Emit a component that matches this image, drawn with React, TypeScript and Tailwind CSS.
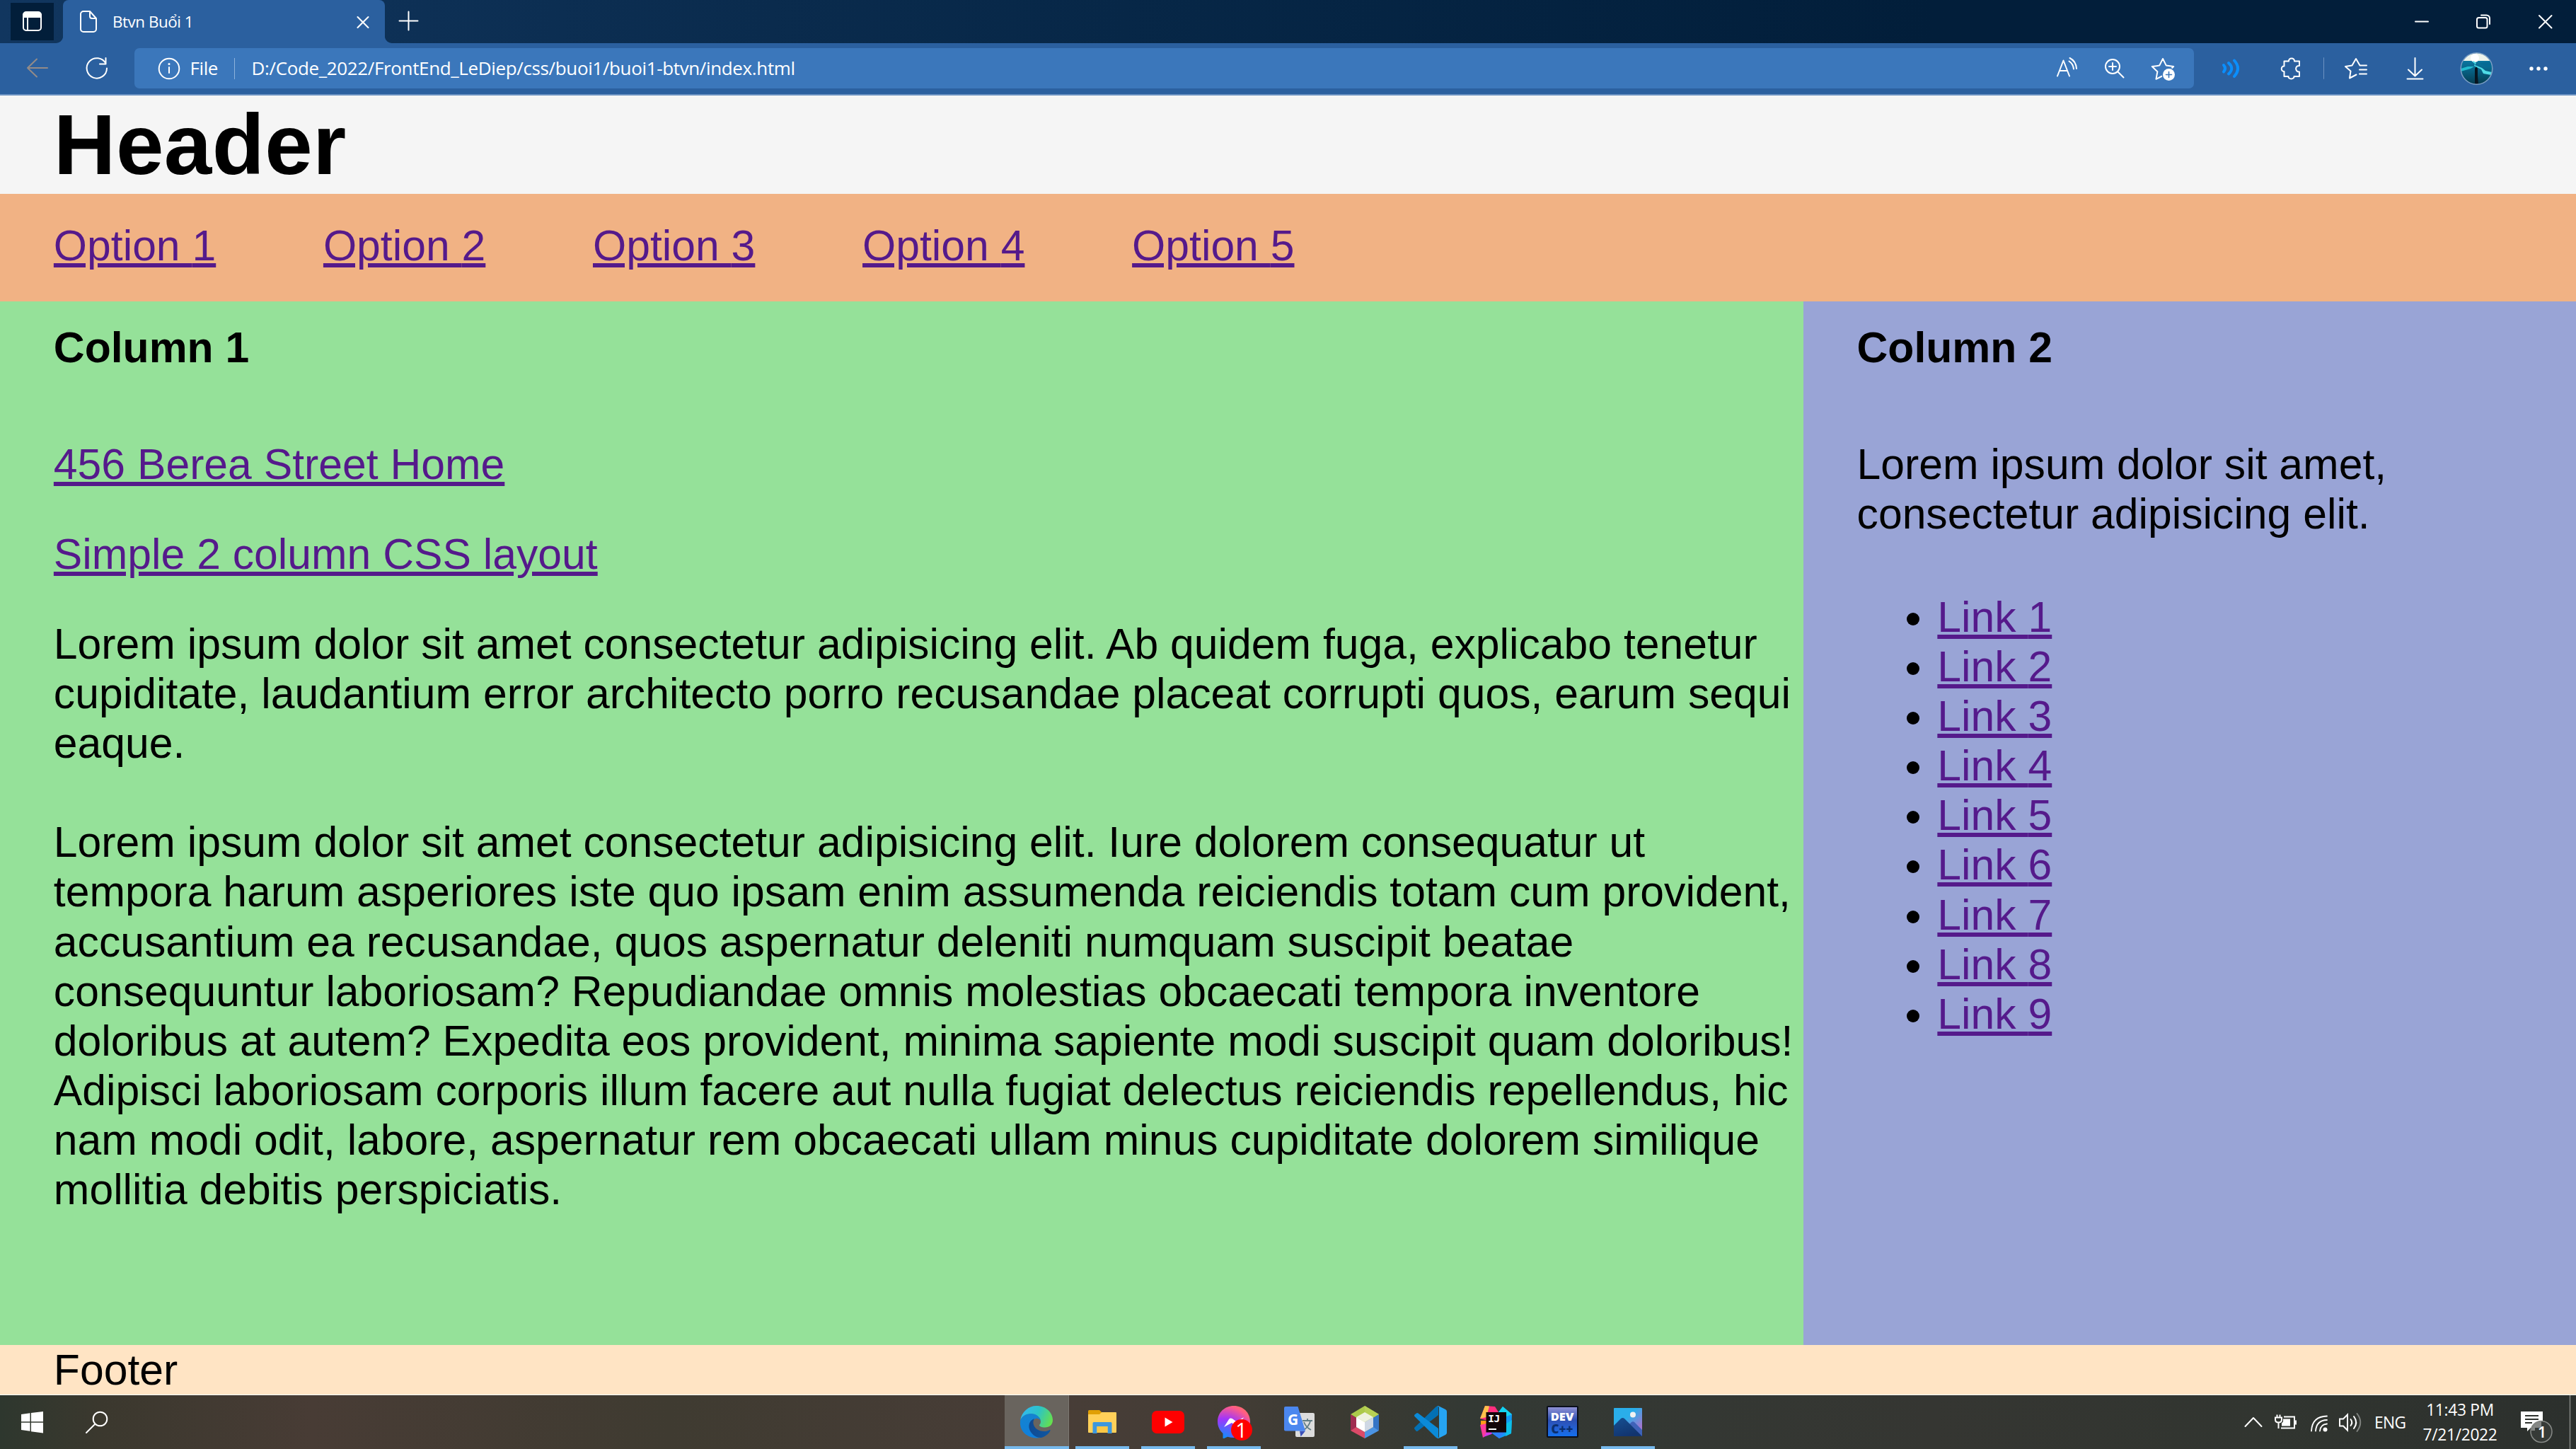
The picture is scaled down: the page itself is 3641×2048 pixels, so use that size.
import React from "react";

type CellProps = { x: number; w: number; y: number; h: number; className?: string; children: React.ReactNode };

/** Icon cell: draws in window coordinates, starting at x and spanning w. */
function Cell({ x, w, y, h, className = "", children }: CellProps) {
  return (
    <svg
      viewBox={`${x} ${y} ${w} ${h}`}
      style={{ width: w, height: h }}
      className={`shrink-0 ${className}`}
      fill="none"
      stroke="#fff"
      strokeWidth={2}
      strokeLinecap="round"
      strokeLinejoin="round"
    >
      {children}
    </svg>
  );
}

function TabStrip() {
  const r = { y: 0, h: 61 };
  return (
    <div className="flex h-[61px] items-start bg-linear-to-r from-[#11365f] via-[#0a2b4d] via-30% to-[#021e3a] to-75%">
      <Cell x={0} w={89} {...r}>
        <rect x="15" y="4" width="61" height="53" fill="#021e3a" stroke="none" />
        <rect x="33" y="18" width="25" height="25" rx="4" />
        <path d="M33 24v-3a4 4 0 0 1 4-4h17a4 4 0 0 1 4 4v3zM39 24v18" fill="#fff" />
        <path d="M79 61a10 10 0 0 0 10-8v8z" fill="#2b609f" stroke="none" />
      </Cell>
      <div className="flex h-[61px] w-[455px] shrink-0 items-center rounded-t-[8px] bg-[#2b609f]">
        <Cell x={89} w={70} {...r}>
          <path d="M118 16h9l9 10v15a4 4 0 0 1-4 4h-14a4 4 0 0 1-4-4V20a4 4 0 0 1 4-4zM127 16v7a3 3 0 0 0 3 3h6" />
        </Cell>
        <span className="w-[327px] whitespace-nowrap text-[22.4px] leading-[61px] tracking-[-0.45px] text-white">Btvn Buổi 1</span>
        <Cell x={486} w={58} {...r}>
          <path d="M505.500 24l15 15M520.500 24l-15 15" />
        </Cell>
      </div>
      <Cell x={544} w={80} {...r}>
        <path d="M544 61h10a10 10 0 0 1-10-8z" fill="#2b609f" stroke="none" />
        <path d="M564.500 29.500h26M577.500 16.500v26" />
      </Cell>
      <div className="flex-1" />
      <Cell x={3380} w={87} {...r}><path d="M3414 30.500h18" /></Cell>
      <Cell x={3467} w={87} {...r}>
        <rect x="3501" y="25" width="14.500" height="14.500" rx="2.500" />
        <path d="M3507 21.500h7.500a4.500 4.500 0 0 1 4.500 4.500v8" />
      </Cell>
      <Cell x={3554} w={87} {...r}><path d="M3589 22l17.500 17.500M3606.500 22L3589 39.500" /></Cell>
    </div>
  );
}

const STAR = "M0-15l4.800 9.600 10.400 1.400-7.600 7.300 1.900 10.500L0 9l-9.500 4.800 1.900-10.500-7.600-7.300 10.400-1.400z";

function Toolbar() {
  const r = { y: 61, h: 74 };
  return (
    <div className="flex h-[73.500px] items-start border-b-2 border-[#6c93c2] bg-[#2b609f]">
      <Cell x={0} w={95} {...r}><path d="M67 96H39M52 83.500L39 96l13 12.500" stroke="#938b88" /></Cell>
      <Cell x={95} w={95} {...r}>
        <path d="M149.500 90A14.200 14.200 0 1 0 151 96.500M149.500 82v8.500h-8.500" />
      </Cell>
      <div className="mt-[7px] flex h-[57px] w-[2911px] shrink-0 items-center rounded-[7px] bg-[#3b77bb] text-[26px] leading-[57px] text-white">
        <Cell x={190} w={78.500} y={68} h={57}>
          <circle cx="239" cy="97" r="14.300" />
          <path d="M239 95v8" />
          <circle cx="239" cy="90.500" r="0.800" fill="#fff" strokeWidth="1.500" />
        </Cell>
        <span className="w-[62px] tracking-[-0.400px]">File</span>
        <span className="h-[30px] w-[1.500px] bg-[#8db2dc]" />
        <span className="ml-[23.500px] flex-1 whitespace-nowrap tracking-[-0.360px]">D:/Code_2022/FrontEnd_LeDiep/css/buoi1/buoi1-btvn/index.html</span>
        <Cell x={2887} w={67} y={68} h={57}>
          <path d="M2908 107.500l8.500-22 8.500 22M2911 100h11M2924.500 86.500c4 2.500 6 6 6.500 11M2925.500 82c6 3 9 8 9.500 15" />
        </Cell>
        <Cell x={2954} w={68} y={68} h={57}>
          <circle cx="2986" cy="94" r="10" />
          <path d="M2993.500 101.500l8 8M2986 89v10M2981 94h10" />
        </Cell>
        <Cell x={3022} w={79} y={68} h={57}>
          <path d={STAR} transform="translate(3057 98)" />
          <circle cx="3065.500" cy="105.500" r="10" fill="#3b77bb" stroke="none" />
          <circle cx="3065.500" cy="105.500" r="8.500" fill="#fff" stroke="none" />
          <path d="M3065.500 101.500v8M3061.500 105.500h8" stroke="#3b77bb" strokeWidth="1.600" />
        </Cell>
      </div>
      <Cell x={3101} w={89} {...r}>
        <path d="M3143 92q4 4.500 0 9.500M3150 89q8.500 7.500 0 15.500M3158 85.500q10 11 0 22.500" stroke="#0a8fff" strokeWidth="4" />
      </Cell>
      <Cell x={3190} w={94} {...r}>
        <path d="M3228.500 86.500h6.500c-.5-5.500 8.500-5.500 8 0h7v6.500c-6.500-1-6.500 9 0 8.500v6.500h-7.500c.5 4.500-8.500 4.500-8 0h-6v-7c-5 .5-5-8 0-7.500z" />
      </Cell>
      <Cell x={3284} w={80} {...r}>
        <path d="M3284 82v29" stroke="#6c93c2" />
        <path d="M3345 92.500h-9.500l-5.500-9.500-5.500 9.500-9.500 1.500 7.500 6.500-1.500 10 9.500-5M3335 98.500h10M3335 104.500h10" />
      </Cell>
      <Cell x={3364} w={94} {...r}><path d="M3413.500 82v25M3404 98.500l9.500 9 9.500-9M3402.500 111.500h22" /></Cell>
      <Cell x={3458} w={94} {...r}>
        <defs>
          <clipPath id="avatar"><circle cx="3500.500" cy="97" r="22" /></clipPath>
          <linearGradient id="sea" x1="0" y1="0" x2="0" y2="1">
            <stop offset="0" stopColor="#0e86b4" />
            <stop offset="0.500" stopColor="#08678c" />
            <stop offset="1" stopColor="#053a4e" />
          </linearGradient>
        </defs>
        <g clipPath="url(#avatar)" stroke="none">
          <rect x="3478" y="74" width="46" height="46" fill="url(#sea)" />
          <rect x="3478" y="74" width="46" height="12" fill="#eef3ea" />
          <circle cx="3498" cy="82" r="6" fill="#fff" />
          <path d="M3496 86l4 3-2 3 10 4 5 4 9 2-1 4-11-2-3-6-10-5 1-3-3-2z" fill="#4fdbe6" />
          <path d="M3478 97l10-3 9 0-5 3-14 4z" fill="#23bccf" />
          <path d="M3504 89l20-2v8l-10-1z" fill="#056a94" />
          <path d="M3498 97q2-5 4 0v10l1 13h-5z" fill="#07141f" />
        </g>
        <circle cx="3500.500" cy="97" r="22.300" stroke="#7c9fc4" strokeWidth="1.500" />
      </Cell>
      <Cell x={3552} w={89} {...r}>
        <g fill="#fff" stroke="none"><circle cx="3578" cy="97" r="2.700" /><circle cx="3588" cy="97" r="2.700" /><circle cx="3598" cy="97" r="2.700" /></g>
      </Cell>
    </div>
  );
}

function A({ children }: { children: React.ReactNode }) {
  return (
    <a href="#" className="text-[#551a8b] underline decoration-[5.700px] underline-offset-[4px]">{children}</a>
  );
}

const PARAGRAPH_1 = [
  "Lorem ipsum dolor sit amet consectetur adipisicing elit. Ab quidem fuga, explicabo tenetur",
  "cupiditate, laudantium error architecto porro recusandae placeat corrupti quos, earum sequi",
  "eaque.",
];
const PARAGRAPH_2 = [
  "Lorem ipsum dolor sit amet consectetur adipisicing elit. Iure dolorem consequatur ut",
  "tempora harum asperiores iste quo ipsam enim assumenda reiciendis totam cum provident,",
  "accusantium ea recusandae, quos aspernatur deleniti numquam suscipit beatae",
  "consequuntur laboriosam? Repudiandae omnis molestias obcaecati tempora inventore",
  "doloribus at autem? Expedita eos provident, minima sapiente modi suscipit quam doloribus!",
  "Adipisci laboriosam corporis illum facere aut nulla fugiat delectus reiciendis repellendus, hic",
  "nam modi odit, labore, aspernatur rem obcaecati ullam minus cupiditate dolorem similique",
  "mollitia debitis perspiciatis.",
];

function Paragraph({ lines }: { lines: string[] }) {
  return (
    <p className="whitespace-nowrap">
      {lines.map((l) => <span key={l} className="block">{l}</span>)}
    </p>
  );
}

function Page() {
  return (
    <div className="font-['Liberation_Sans',Arial,sans-serif] text-[60.680px] leading-[70.160px] text-black">
      <header className="h-[139.900px] bg-[#f5f5f5] pl-[75.860px]">
        <h1 className="text-[121.370px] leading-[139.900px] font-bold tracking-[0.400px]">Header</h1>
      </header>
      <nav className="flex h-[151.700px] gap-[151.700px] bg-[#f1b284] pt-[37.400px] pl-[75.860px]">
        {[1, 2, 3, 4, 5].map((n) => <A key={n}>Option {n}</A>)}
      </nav>
      <div className="flex h-[1474.900px]">
        <main className="w-[70%] bg-[#95e199] pt-[29.800px] pl-[75.860px]">
          <h2 className="font-bold">Column 1</h2>
          <p className="mt-[94.500px]"><A>456 Berea Street Home</A></p>
          <p className="mt-[56.900px] mb-[56.900px]"><A>Simple 2 column CSS layout</A></p>
          <Paragraph lines={PARAGRAPH_1} />
          <div className="h-[70.160px]" />
          <Paragraph lines={PARAGRAPH_2} />
        </main>
        <aside className="w-[30%] bg-[#99a4d6] pt-[29.800px] pl-[75.860px]">
          <h2 className="font-bold">Column 2</h2>
          <p className="mt-[94.500px]">Lorem ipsum dolor sit amet,<br />consectetur adipisicing elit.</p>
          <ul className="mt-[75.860px] list-disc pl-[113.800px]">
            {[1, 2, 3, 4, 5, 6, 7, 8, 9].map((n) => <li key={n}><A>Link {n}</A></li>)}
          </ul>
        </aside>
      </div>
      <footer className="h-[71px] border-b-[1.500px] border-white bg-[#ffe4c4] pl-[75.860px]">Footer</footer>
    </div>
  );
}

function EdgeIcon() {
  return (
    <svg viewBox="0 0 46 46" className="size-[46px]">
      <defs>
        <linearGradient id="eg1" x1="0" y1="0.300" x2="1" y2="0.600"><stop offset="0" stopColor="#35b8f0" /><stop offset="0.500" stopColor="#2cc3c8" /><stop offset="1" stopColor="#65e04e" /></linearGradient>
        <linearGradient id="eg2" x1="0.300" y1="0" x2="0.500" y2="1"><stop offset="0" stopColor="#1583cf" /><stop offset="1" stopColor="#0f7fdc" /></linearGradient>
        <linearGradient id="eg3" x1="0" y1="0" x2="1" y2="0.300"><stop offset="0" stopColor="#10488f" /><stop offset="1" stopColor="#0f559f" /></linearGradient>
      </defs>
      <path d="M0 21C2 8 12 0 23 0c14 0 23 10 23 20 0 7-5 10.500-11 10.500-5 0-8-1.500-8-3 0-1 2-2 2-5 0-6-6-11-13-11C8 11.500 2 15 0 21z" fill="url(#eg1)" />
      <path d="M0 21c2-6 8-10 15-10 8 0 13 5 14 10-2-3-5-3.500-7-3-4 1-8 8-5 15s9 11 12 12C13 48-2 37 0 21z" fill="url(#eg2)" />
      <path d="M20 18c-6 2-9 8-7 15 2 6 9 13 17 12 6-2 11-6 12.500-10 .3-1-.6-1.300-1.300-.8C32 39 20 34 18.500 25c-.3-3 .5-5.500 1.500-7z" fill="url(#eg3)" />
    </svg>
  );
}

function ExplorerIcon() {
  return (
    <svg viewBox="0 0 40 34" className="h-[34px] w-[40px]">
      <path d="M0 1.500Q0 0 1.500 0H16l3 3-3 5H0z" fill="#e09f05" />
      <path d="M0 6h16l3-3h20q1 0 1 1v27q0 1-1 1H1q-1 0-1-1z" fill="#ffd059" />
      <path d="M6.500 33V18.500q0-1.500 1.500-1.500h24q1.500 0 1.500 1.500V33h-6V23h-15v10z" fill="#3c97de" />
      <path d="M12.500 23h15v9h-15z" fill="#fbc745" />
    </svg>
  );
}

function YouTubeIcon() {
  return (
    <svg viewBox="0 0 46 32" className="h-[32px] w-[46px]">
      <rect width="46" height="32" rx="7" fill="#f00" /><path d="M18.500 9.500v13l11-6.500z" fill="#fff" />
    </svg>
  );
}

function MessengerIcon() {
  return (
    <div className="relative size-[46px]">
      <svg viewBox="0 0 46 46" className="size-[46px]">
        <defs>
          <radialGradient id="ms" cx="0.200" cy="1" r="1.100"><stop offset="0" stopColor="#0a93ff" /><stop offset="0.550" stopColor="#a035fb" /><stop offset="0.900" stopColor="#ff5c87" /><stop offset="1" stopColor="#ff6c6c" /></radialGradient>
        </defs>
        <path d="M23 0C10 0 0 9.500 0 22.300 0 29 3 35 7.500 39v6c0 1 .8 1.300 1.600 1l5-2.300c2.800.8 5.700 1.200 8.900 1.200 13 0 23-9.500 23-22.600C46 9.500 36 0 23 0z" fill="url(#ms)" />
        <path d="M9 30l7-11q2-2.500 5-.8l5.500 4 10.500-6-7 11q-2 2.500-4.500.8l-5.500-4z" fill="#fff" />
      </svg>
      <span className="absolute top-[19px] left-[19px] flex size-[30px] items-center justify-center rounded-full bg-[#f00] text-[29px] leading-[30px] text-white">1</span>
    </div>
  );
}

function TranslateIcon() {
  return (
    <div className="relative h-[44px] w-[43px]">
      <svg viewBox="0 0 43 44" className="h-[44px] w-[43px]">
        <rect x="16" y="9" width="27" height="34" rx="2" fill="#dcdcdc" />
        <path d="M22 34.500h8l-6.500 8z" fill="#3a4fb8" />
        <path d="M26 20h14M33 17v3M37 21c-2 6-6 10-9 12M28 22c2 5 6 9 10 11" stroke="#607d85" strokeWidth="1.800" fill="none" />
        <path d="M2 0h17.500L30 34.500H2q-2 0-2-2V2Q0 0 2 0z" fill="#4b87ef" />
      </svg>
      <span className="absolute top-[5px] left-[5px] text-[21px] leading-[26px] font-bold text-white">G</span>
    </div>
  );
}

function NetBeansIcon() {
  return (
    <svg viewBox="0 0 40 46" className="h-[46px] w-[40px]">
      <path d="M20 0l20 12-20 12L0 12z" fill="#acc94b" />
      <path d="M20 0l20 12-8 5-12-8z" fill="#b7d055" />
      <path d="M0 12l8 5v14l-8 4z" fill="#a02c50" />
      <path d="M0 35l8-5 12 7v9z" fill="#db4a68" />
      <path d="M40 12l-8 5v14l8 4z" fill="#3474c6" />
      <path d="M40 35l-8-5-12 7v9z" fill="#4b94e4" />
      <path d="M20 9l12 7-12 7-12-7z" fill="#eef2df" />
      <path d="M8 16l12 7v14L8 30z" fill="#fff" />
      <path d="M32 16l-12 7v14l12-7z" fill="#cfd8e4" />
    </svg>
  );
}

function CodeIcon() {
  return (
    <svg viewBox="0 0 46 46" className="size-[46px]">
      <path d="M34 0v13L5 35.500q-1.500 1-2.500 0L.5 33q-1-1.500 0-2.500L31 1z" fill="#0370b4" />
      <path d="M.5 15q-1-1.500 0-2.500L3 10.500q1.200-.8 2.500 0L34 32v14l-3-1z" fill="#0b8ad8" />
      <path d="M32 .5q1-.8 2.500-.2L44 5q2 1 2 3v30q0 2-2 3l-9.500 4.700q-1.500.5-2.500-.4 3 .7 3-1.800v-41q0-2.500-3-2z" fill="#26a4f2" />
    </svg>
  );
}

function IntelliJIcon() {
  return (
    <div className="relative size-[46px]">
      <svg viewBox="0 0 46 46" className="size-[46px]">
        <path d="M7 0l14 1 5 8-8 14L0 18z" fill="#ff2e7e" />
        <path d="M7 0l6 .5L9 16 0 18z" fill="#ffc24b" />
        <path d="M1 21l10 0-1 10-9-4z" fill="#ff9a18" />
        <path d="M0 27l9-2 3 14-8 6z" fill="#fb3a9c" />
        <path d="M11 34l14-3-9 9-11 4z" fill="#d03be8" />
        <path d="M32 1l13 11-1 27-17 7-11-8L26 9z" fill="#129af5" />
        <path d="M32 1l13 11-10 4-9-7z" fill="#12d3f0" />
        <path d="M37 25l8-5-1 19-8 4z" fill="#0bbfe8" />
        <path d="M16 38l20-2-9 10z" fill="#2d7ff8" />
        <rect x="8.500" y="9" width="28.500" height="28.500" fill="#120508" />
        <rect x="12" y="32" width="11" height="2" fill="#fff" />
      </svg>
      <span className="absolute top-[10px] left-[11px] font-['DejaVu_Sans_Mono',monospace] text-[14.500px] leading-[16px] font-bold tracking-[-0.500px] text-white">IJ</span>
    </div>
  );
}

function DevIcon() {
  return (
    <div className="flex h-[45px] w-[45px] flex-col items-center rounded-[2px] border-2 border-[#0a0f1c] bg-linear-to-b from-[#8f90d4] via-[#2c50b4] via-45% to-[#1170ee]">
      <div className="mt-[1px] text-[16.500px] leading-[23px] font-extrabold text-white">DEV</div>
      <div className="-mt-[5px] text-[17px] leading-[23px] font-extrabold whitespace-nowrap text-[#0b2f6e]">C++</div>
    </div>
  );
}

function PhotosIcon() {
  return (
    <svg viewBox="0 0 40 40" className="size-[40px]">
      <defs>
        <linearGradient id="ph" x1="0" y1="0" x2="1" y2="1"><stop offset="0.400" stopColor="#2aaeea" /><stop offset="0.800" stopColor="#a078d0" /></linearGradient>
        <linearGradient id="pm" x1="0" y1="0" x2="0.500" y2="1"><stop offset="0" stopColor="#164f92" /><stop offset="1" stopColor="#12346e" /></linearGradient>
      </defs>
      <rect width="40" height="40" rx="1" fill="url(#ph)" />
      <path d="M20 25l5-5q2-1.500 4 0l11 11v9H28z" fill="#3f62b8" />
      <path d="M0 25l10-10q2.500-2 5 0l25 25H0z" fill="url(#pm)" />
      <circle cx="27" cy="9.500" r="4" fill="#f2f2f2" />
    </svg>
  );
}

const APPS = [
  { id: "edge", icon: <EdgeIcon />, open: true },
  { id: "explorer", icon: <ExplorerIcon />, open: true },
  { id: "youtube", icon: <YouTubeIcon />, open: true },
  { id: "messenger", icon: <MessengerIcon />, open: true },
  { id: "translate", icon: <TranslateIcon />, open: false },
  { id: "netbeans", icon: <NetBeansIcon />, open: false },
  { id: "code", icon: <CodeIcon />, open: true },
  { id: "intellij", icon: <IntelliJIcon />, open: false },
  { id: "dev", icon: <DevIcon />, open: false },
  { id: "photos", icon: <PhotosIcon />, open: true },
];

function Taskbar() {
  const r = { y: 1972, h: 76 };
  return (
    <div className="flex flex-1 items-start overflow-hidden bg-[linear-gradient(90deg,#2e372e_0%,#3b382e_4%,#483c35_12%,#3f3b31_26%,#483d37_40%,#443d36_47%,#3b3a32_52%,#333934_57%,#353632_75%,#313530_88%,#2c302d_100%)] text-white">
      <Cell x={0} w={91} {...r}>
        <g fill="#fff" stroke="none">
          <path d="M30 1999l12.500-1.800v12.100H30zM44 1997l17-2v14.300H44zM30 2010.700h12.500v12.100L30 2021zM44 2010.700h17v14.800l-17-2.200z" />
        </g>
      </Cell>
      <Cell x={91} w={91} {...r}><circle cx="141.500" cy="2005.500" r="9.800" /><path d="M134 2013l-12 12" /></Cell>
      <div className="ml-[1236.500px] flex">
        {APPS.map((a) => (
          <div key={a.id} className="relative flex h-[76px] w-[92.900px] shrink-0 items-center justify-center">
            {a.id === "edge" && <div className="absolute inset-y-0 left-[1px] w-[91.500px] border-r border-[#7d7771] bg-[#69645e]" />}
            <div className="relative">{a.icon}</div>
            {a.open && (
              <div className={a.id === "edge" ? "absolute bottom-0 left-[1px] h-[4px] w-[91px] bg-[#76b9ed]" : "absolute bottom-0 left-[8.500px] h-[4px] w-[76px] bg-[#76b9ed]"} />
            )}
          </div>
        ))}
      </div>
      <div className="flex-1" />
      <Cell x={3165} w={40} {...r}><path d="M3173.500 2016l11.500-12 11.500 12" /></Cell>
      <Cell x={3205} w={50} {...r}>
        <path d="M3218.500 1999.500v4M3222.500 1999.500v4M3216 2003.500h9v3q0 4-4.500 4t-4.500-4zM3220.500 2011v8M3228 2002.500h15v16h-19M3245 2007.500v6" strokeLinecap="butt" strokeLinejoin="miter" />
        <path d="M3227 2005.500h10v10h-12v-4l2-2z" fill="#fff" stroke="none" />
      </Cell>
      <Cell x={3255} w={43} {...r}>
        <path d="M3267 2022.500q1-20.500 22-21M3273 2022.500q1-15 16-15.500M3279 2022.500q1-9.500 10-10" strokeWidth="1.800" />
        <circle cx="3286.500" cy="2020.500" r="3" fill="#fff" stroke="none" />
      </Cell>
      <Cell x={3298} w={58} {...r}>
        <path d="M3307 2005.500h5l6-6v22l-6-6h-5zM3322.500 2006q3.500 4.500 0 9M3327 2002q6.500 8.500 0 17" strokeLinejoin="miter" />
        <path d="M3331.500 1998q9.500 12 0 25" stroke="#7d807d" />
      </Cell>
      <span className="mt-[1px] w-[64px] text-[22.750px] leading-[76px] tracking-[-0.600px]">ENG</span>
      <div className="flex w-[112px] flex-col items-center pt-[3px] pl-[2px] text-[22.750px] leading-[35px] tracking-[-0.300px] whitespace-nowrap">
        <span>11:43 PM</span>
        <span>7/21/2022</span>
      </div>
      <div className="relative">
        <Cell x={3532} w={109} {...r} className="block">
          <path d="M3563 1995h31v23h-17l-5 5v-5h-9z" fill="#fff" stroke="none" />
          <path d="M3569 2001h19M3569 2006h19M3569 2011h10" stroke="#2e322e" strokeLinecap="butt" strokeWidth="1.800" />
          <circle cx="3592" cy="2023.500" r="15" fill="#363a37" stroke="#888b88" strokeWidth="1.500" />
          <path d="M3578 2022a14 14 0 0 1 14-13v9h-9v4z" fill="#858785" stroke="none" />
          <path d="M3632.500 1972v76" stroke="#838683" strokeWidth="1.500" />
        </Cell>
        <span className="absolute top-[38px] left-[46px] w-[30px] text-center text-[22px] leading-[26px] font-semibold">1</span>
      </div>
    </div>
  );
}

export default function App() {
  return (
    <div className="flex h-[2048px] w-[3641px] flex-col overflow-hidden font-['Open_Sans','Noto_Sans',sans-serif]">
      <TabStrip />
      <Toolbar />
      <Page />
      <Taskbar />
    </div>
  );
}
